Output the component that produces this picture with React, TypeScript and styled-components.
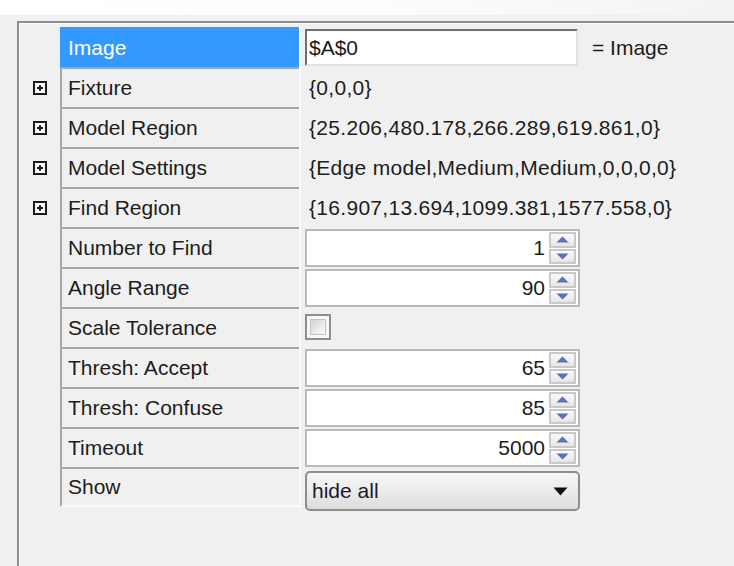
import React from 'react';
import styled, { createGlobalStyle } from 'styled-components';

const GlobalStyle = createGlobalStyle`
  html, body {
    margin: 0;
    padding: 0;
    background: #f0f0f0;
    font-family: "Liberation Sans", Arial, sans-serif;
    overflow: hidden;
  }
`;

type RowKind = 'text' | 'static' | 'spin' | 'check' | 'select';

type Row = {
  label: string;
  kind: RowKind;
  value?: string;
  suffix?: string;
  expandable?: boolean;
  selected?: boolean;
};

const rows: Row[] = [
  { label: 'Image', kind: 'text', value: '$A$0', suffix: '= Image', selected: true },
  { label: 'Fixture', kind: 'static', value: '{0,0,0}', expandable: true },
  { label: 'Model Region', kind: 'static', value: '{25.206,480.178,266.289,619.861,0}', expandable: true },
  { label: 'Model Settings', kind: 'static', value: '{Edge model,Medium,Medium,0,0,0,0}', expandable: true },
  { label: 'Find Region', kind: 'static', value: '{16.907,13.694,1099.381,1577.558,0}', expandable: true },
  { label: 'Number to Find', kind: 'spin', value: '1' },
  { label: 'Angle Range', kind: 'spin', value: '90' },
  { label: 'Scale Tolerance', kind: 'check' },
  { label: 'Thresh: Accept', kind: 'spin', value: '65' },
  { label: 'Thresh: Confuse', kind: 'spin', value: '85' },
  { label: 'Timeout', kind: 'spin', value: '5000' },
  { label: 'Show', kind: 'select', value: 'hide all' },
];

const Page = styled.div`
  width: 734px;
  height: 566px;
  display: flex;
  flex-direction: column;
`;

const TopStrip = styled.div`
  height: 15px;
  background: linear-gradient(90deg, #ffffff 0%, #fdfdfd 50%, #f3f3f3 100%);
  margin-bottom: 6px;
`;

const Frame = styled.div`
  flex: 1;
  margin-left: 17px;
  border-top: 2px solid #8e8e8e;
  border-left: 2px solid #8e8e8e;
  box-shadow: inset 1px 1px 0 #fcfcfc;
  padding-top: 4px;
`;

const Grid = styled.div`
  display: grid;
  grid-template-columns: 41px 239px 1fr;
  grid-auto-rows: 40px;
`;

const ExpanderCell = styled.div`
  display: flex;
  align-items: center;
  justify-content: center;
  padding: 2px 0 0 0;
`;

const LabelCell = styled.div<{ $selected?: boolean; $last?: boolean }>`
  display: flex;
  align-items: center;
  padding-left: 6px;
  font-size: 21px;
  color: ${p => (p.$selected ? '#ffffff' : '#1c1c1c')};
  background: ${p => (p.$selected ? '#3399ff' : 'transparent')};
  border-top: 2px solid ${p => (p.$selected ? '#3399ff' : '#a6a6a6')};
  border-left: 2px solid ${p => (p.$selected ? '#3399ff' : '#a6a6a6')};
  border-bottom: ${p => (p.$last ? '2px solid #fbfbfb' : 'none')};
  white-space: nowrap;
`;

const ValueCell = styled.div`
  display: flex;
  align-items: stretch;
  padding: 2px 0 0 4px;
  border-left: 2px solid #fafafa;
  font-size: 21px;
  color: #1c1c1c;
  white-space: nowrap;
`;

const StaticValue = styled.span`
  display: flex;
  align-items: center;
  padding-left: 4px;
  letter-spacing: 0.3px;
`;

const TextBox = styled.div`
  width: 273px;
  height: 37px;
  box-sizing: border-box;
  background: #ffffff;
  border: 2px solid #e2e2e2;
  border-top-color: #6f6f6f;
  border-left-color: #6f6f6f;
  display: flex;
  align-items: center;
  padding-left: 2px;
`;

const Suffix = styled.span`
  display: flex;
  align-items: center;
  margin-left: 14px;
`;

const SpinBox = styled.div`
  width: 275px;
  height: 38px;
  box-sizing: border-box;
  background: #ffffff;
  border: 2px solid #b9b9b9;
  display: flex;
  align-items: stretch;
`;

const SpinValue = styled.span`
  flex: 1;
  display: flex;
  align-items: center;
  justify-content: flex-end;
  padding-right: 4px;
`;

const SpinButtons = styled.div`
  width: 27px;
  margin: 1px 2px 1px 0;
  display: flex;
  flex-direction: column;
  gap: 1px;
`;

const SpinButton = styled.div`
  flex: 1;
  display: flex;
  align-items: center;
  justify-content: center;
  border: 2px solid #c9c9c9;
  background: linear-gradient(#fafafa, #e6e6e6);
`;

const CheckCell = styled.div`
  display: flex;
  align-items: center;
  padding-bottom: 2px;
`;

const CheckBox = styled.div`
  width: 26px;
  height: 26px;
  box-sizing: border-box;
  border: 2px solid #8f8f8f;
  padding: 3px;
  background: #f8f8f8;
`;

const CheckInner = styled.div`
  width: 100%;
  height: 100%;
  box-sizing: border-box;
  border: 1px solid #c4c4c4;
  background: linear-gradient(135deg, #d4d4d4, #fbfbfb);
`;

const Select = styled.div`
  width: 275px;
  height: 40px;
  box-sizing: border-box;
  margin-top: 2px;
  border: 2px solid #8d8d8d;
  border-radius: 5px;
  background: linear-gradient(#f6f6f6 0%, #ececec 50%, #dcdcdc 100%);
  display: flex;
  align-items: center;
  justify-content: space-between;
  padding: 0 10px 0 5px;
  color: #1a1a2e;
`;

const PlusIcon = () => (
  <svg width="14" height="14" viewBox="0 0 14 14">
    <rect x="1" y="1" width="12" height="12" fill="#fff" stroke="#1a1a1a" strokeWidth="2" />
    <path d="M4 7h6M7 4v6" stroke="#1a1a1a" strokeWidth="2" />
  </svg>
);

const Arrow = ({ up }: { up?: boolean }) => (
  <svg width="13" height="7" viewBox="0 0 13 7">
    <path d={up ? 'M0.5 6.5L6.5 0.5l6 6z' : 'M0.5 0.5L6.5 6.5l6-6z'} fill="#5f6fb3" />
  </svg>
);

const DropArrow = () => (
  <svg width="15" height="9" viewBox="0 0 15 9">
    <path d="M0.5 0.5h14L7.5 8.5z" fill="#111" />
  </svg>
);

function renderValue(row: Row) {
  switch (row.kind) {
    case 'text':
      return (
        <>
          <TextBox>{row.value}</TextBox>
          <Suffix>{row.suffix}</Suffix>
        </>
      );
    case 'static':
      return <StaticValue>{row.value}</StaticValue>;
    case 'spin':
      return (
        <SpinBox>
          <SpinValue>{row.value}</SpinValue>
          <SpinButtons>
            <SpinButton><Arrow up /></SpinButton>
            <SpinButton><Arrow /></SpinButton>
          </SpinButtons>
        </SpinBox>
      );
    case 'check':
      return (
        <CheckCell>
          <CheckBox><CheckInner /></CheckBox>
        </CheckCell>
      );
    case 'select':
      return (
        <Select>
          <span>{row.value}</span>
          <DropArrow />
        </Select>
      );
  }
}

const App: React.FC = () => {
  return (
    <Page>
      <GlobalStyle />
      <TopStrip />
      <Frame>
        <Grid>
          {rows.map((row, i) => (
            <React.Fragment key={row.label}>
              <ExpanderCell>{row.expandable && <PlusIcon />}</ExpanderCell>
              <LabelCell $selected={row.selected} $last={i === rows.length - 1}>
                {row.label}
              </LabelCell>
              <ValueCell>{renderValue(row)}</ValueCell>
            </React.Fragment>
          ))}
        </Grid>
      </Frame>
    </Page>
  );
};

export default App;
